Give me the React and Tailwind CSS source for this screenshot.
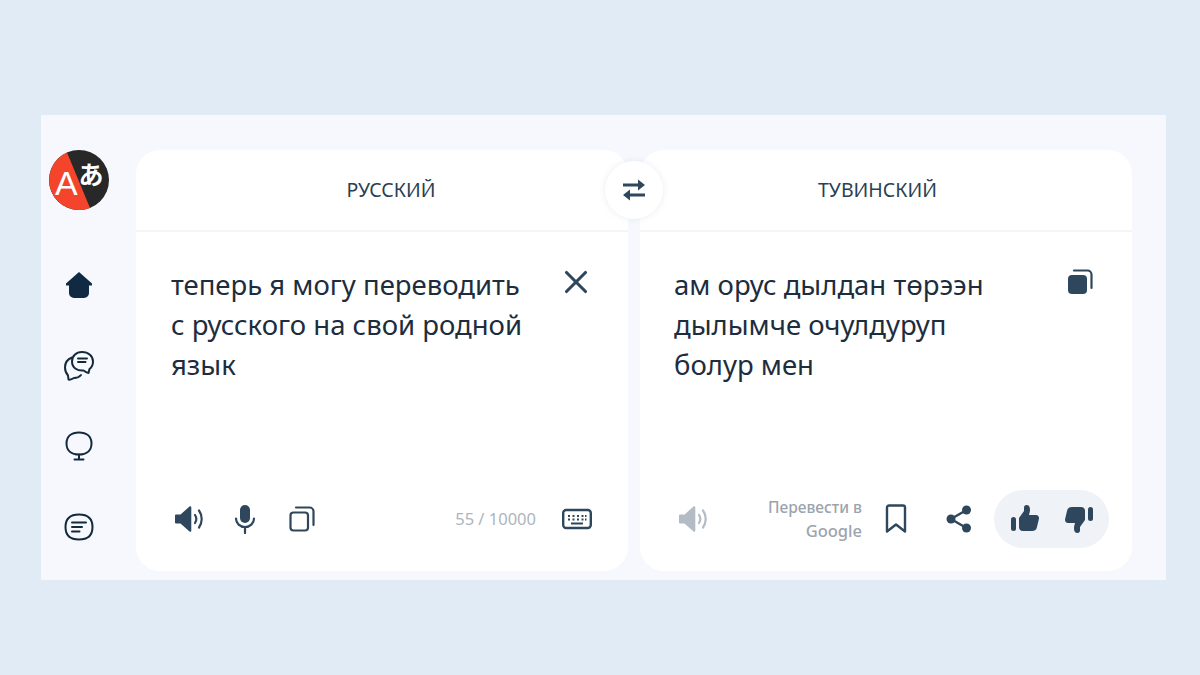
import { X } from "lucide-react";

const Speaker = ({ className }) => (
    <svg viewBox="0 0 30 28" className={className} fill="none">
        <path d="M1 10.500a1 1 0 0 1 1-1h4.500L15.500 1.500c.7-.6 1.800-.1 1.800.8v23.400c0 .9-1.100 1.400-1.800.8L6.500 18.500H2a1 1 0 0 1-1-1z" fill="currentColor" />
        <path d="M21 10c1.600 2.400 1.600 5.600 0 8M25 5.500c3.600 5 3.600 12 0 17" stroke="currentColor" strokeWidth="2.200" strokeLinecap="round" />
    </svg>
);

const CopyIcon = () => (
    <svg viewBox="0 0 26 26" className="w-[26px] h-[26px] text-[#2f475c]" fill="none" stroke="currentColor" strokeWidth="2.200">
        <rect x="1.500" y="6.500" width="17.500" height="18" rx="3" />
        <path d="M7 1.500h13.500a4 4 0 0 1 4 4V19" strokeLinecap="round" />
    </svg>
);

const Thumb = ({ className }) => (
    <svg viewBox="0 0 28 28" className={className} fill="currentColor">
        <rect x="0" y="12" width="5" height="14" rx="2.500" />
        <path d="M8 13l5-7V2.500C13 1 14 0 15.500 0 18 0 19 2 19 4.500c0 2-.5 3.500-1 5.500h7c2 0 3 1.500 3 3.500L26 22c-.5 2.500-2 4-5 4H12c-2.500 0-4-1.500-4-4z" />
    </svg>
);

export default function App() {
    return (
        <div className="h-[675px] w-[1200px] overflow-hidden bg-[#e1ebf5] pt-[115px] pl-[41px] font-['Noto_Sans',sans-serif]">
            <div className="flex h-[465px] w-[1125px] bg-[#f6f8fd] pt-[35px]">
                {/* Sidebar */}
                <div className="flex w-[95px] shrink-0 flex-col items-center pr-[20px]">
                    <svg viewBox="0 0 60 60" className="h-[60px] w-[60px]">
                        <circle cx="30" cy="30" r="30" fill="#282828" />
                        <path d="M18 2.500A30 30 0 0 0 41 57.900z" fill="#f4452c" />
                        <text x="6" y="45" fill="#fff" fontSize="34" fontFamily="Liberation Sans">A</text>
                        <text x="29.500" y="34" fill="#fff" fontSize="25" fontWeight="700" fontFamily="Noto Sans CJK JP">あ</text>
                    </svg>
                    <svg viewBox="0 0 28 26" className="mt-[62px] h-[26px] w-[28px]" fill="#0f2a42">
                        <path d="M14 0l13 11.500v2h-3V21a5 5 0 0 1-5 5H9a5 5 0 0 1-5-5v-7.500H1v-2z" />
                    </svg>
                    <svg viewBox="0 0 32 32" className="mt-[52px] h-[32px] w-[32px]" fill="none" stroke="#13293d" strokeWidth="2" strokeLinecap="round" strokeLinejoin="round">
                        <path d="M9 7.500c-4 1.500-7 5-7 10 0 3 1.200 6 3 8l.5 4c2 .5 4-.5 5.500-1.500 2 0 5-.5 7-3" />
                        <path d="M19 2c6.500 0 11 4 11 9.500 0 3.500-1.500 6-3.500 7.500l-1 4c-2-.5-4-1.800-5-2.500-6.500.5-11.500-3-11.500-9C9 6 13 2 19 2z" fill="#f9fbff" />
                        <path d="M15 8.500h9M15 12h7.500" />
                    </svg>
                    <svg viewBox="0 0 28 30" className="mt-[49px] h-[30px] w-[28px]" fill="none" stroke="#13293d" strokeWidth="2" strokeLinecap="round">
                        <path d="M14 1.500c7.500 0 12.500 4 12.500 11s-5 11-12.500 11S1.500 19.500 1.500 12.500 6.500 1.500 14 1.500z" />
                        <path d="M14 23.500v5M9.500 28.500h9" />
                    </svg>
                    <svg viewBox="0 0 30 28" className="mt-[52px] h-[28px] w-[30px]" fill="none" stroke="#13293d" strokeWidth="2" strokeLinecap="round">
                        <path d="M15 1.500c9 0 13.500 3.500 13.500 12.500S24 26.500 15 26.500 1.500 23 1.500 14 6 1.500 15 1.500z" />
                        <path d="M8 9.500h14M8 14h10M8 18.500h7.500" />
                    </svg>
                </div>

                {/* Cards */}
                <div className="relative flex gap-[12px]">
                    <div className="flex h-[421px] w-[492px] flex-col rounded-[24px] bg-white text-[#1d2d3e]">
                        <div className="flex h-[82px] shrink-0 items-center justify-center border-b-2 border-[#f3f5f9] pl-[18px] text-[19.500px] text-[#2b3f52]">
                            РУССКИЙ
                        </div>
                        <div className="flex flex-1 pt-[33px] pr-[33px] pl-[35px]">
                            <p className="flex-1 text-[27.500px] leading-[40px]">
                                теперь я могу переводить<br />с русского на свой родной<br />язык
                            </p>
                            <X className="-mt-[2px] h-[38px] w-[38px] text-[#2f475c]" strokeWidth={2} />
                        </div>
                        <div className="flex items-center pr-[36px] pb-[37px] pl-[38px] text-[#2f475c]">
                            <Speaker className="h-[28px] w-[30px]" />
                            <svg viewBox="0 0 22 30" className="ml-[30px] h-[30px] w-[22px]" fill="none">
                                <rect x="6" y="1" width="10" height="18" rx="5" fill="currentColor" />
                                <path d="M2 14.500c0 5 4 8.500 9 8.500s9-3.500 9-8.500M11 23v6" stroke="currentColor" strokeWidth="2.200" strokeLinecap="round" />
                            </svg>
                            <div className="ml-[33px]"><CopyIcon /></div>
                            <span className="ml-auto text-[16.500px] text-[#adb5bd]">55 / 10000</span>
                            <svg viewBox="0 0 30 22" className="ml-[26px] h-[22px] w-[30px]" fill="none">
                                <rect x="1.200" y="2" width="27.600" height="18" rx="3" stroke="currentColor" strokeWidth="2.400" />
                                <path d="M6 8h2M10.500 8h2M15 8h2M19.500 8h2M23 8h1.500M6 11.500h2M10.500 11.500h2M15 11.500h2M19.500 11.500h2M23 11.500h1.500M9 15.500h12" stroke="currentColor" strokeWidth="2" />
                            </svg>
                        </div>
                    </div>

                    <div className="flex h-[421px] w-[492px] flex-col rounded-[24px] bg-white text-[#1d2d3e]">
                        <div className="flex h-[82px] shrink-0 items-center justify-center border-b-2 border-[#f3f5f9] pr-[17px] text-[19.500px] text-[#2b3f52]">
                            ТУВИНСКИЙ
                        </div>
                        <div className="flex flex-1 pt-[33px] pr-[39px] pl-[34px]">
                            <p className="flex-1 text-[27.500px] leading-[40px]">
                                ам орус дылдан төрээн<br />дылымче очулдуруп<br />болур мен
                            </p>
                            <svg viewBox="0 0 26 26" className="mt-[4px] h-[26px] w-[26px] text-[#2f475c]" fill="none">
                                <rect x="1" y="6" width="19" height="19" rx="4" fill="currentColor" />
                                <path d="M7 1.500h13.500a4 4 0 0 1 4 4V19" stroke="currentColor" strokeWidth="2.200" strokeLinecap="round" />
                            </svg>
                        </div>
                        <div className="flex items-center pr-[23px] pb-[23px] pl-[38px] text-[#2f475c]">
                            <Speaker className="h-[28px] w-[30px] text-[#b3bcc5]" />
                            <div className="ml-auto text-right text-[15.500px] leading-[24px] font-medium text-[#9aa4ae]">
                                Перевести в<br /><span className="text-[16.500px]">Google</span>
                            </div>
                            <svg viewBox="0 0 22 30" className="ml-[23px] h-[30px] w-[22px]" fill="none">
                                <path d="M2 3.500A2 2 0 0 1 4 1.500h14a2 2 0 0 1 2 2v24l-9-7-9 7z" stroke="currentColor" strokeWidth="2.400" strokeLinejoin="round" />
                            </svg>
                            <svg viewBox="0 0 26 28" className="ml-[39px] h-[28px] w-[26px]" fill="currentColor">
                                <circle cx="20.500" cy="5" r="4.500" /><circle cx="5" cy="14" r="4.500" /><circle cx="20.500" cy="23" r="4.500" />
                                <path d="M20.500 5L5 14l15.500 9" fill="none" stroke="currentColor" strokeWidth="2.400" />
                            </svg>
                            <div className="ml-[22px] flex h-[58px] w-[115px] items-center justify-center gap-[26px] rounded-full bg-[#eff2f7]">
                                <Thumb className="h-[28px] w-[28px]" />
                                <Thumb className="h-[28px] w-[28px] rotate-180" />
                            </div>
                        </div>
                    </div>

                    {/* Swap button over the cards */}
                    <div className="absolute top-[11px] left-[469px] flex h-[58px] w-[58px] items-center justify-center rounded-full bg-white shadow-[0_0_6px_rgba(190,200,220,0.35)]">
                        <svg viewBox="0 0 24 24" className="h-[24px] w-[24px]" fill="#2f475c">
                            <path d="M1 5.500h15V1.500l7 5.500-7 5.500v-4H1z" />
                            <path d="M23 15.500H8v-4l-7 5.500 7 5.500v-4h15z" />
                        </svg>
                    </div>
                </div>
            </div>
        </div>
    );
}
